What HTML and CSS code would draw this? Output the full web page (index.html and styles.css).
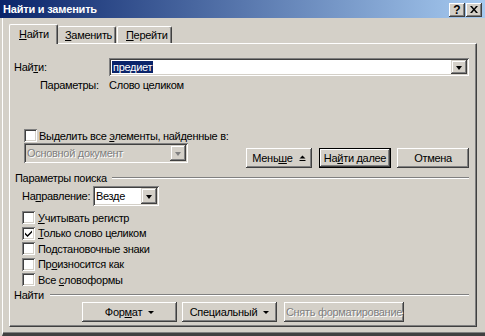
FILE: index.html
```html
<!DOCTYPE html>
<html lang="ru">

<head>
    <meta charset="UTF-8">
    <meta name="viewport" content="width=device-width, initial-scale=1.0">
    <title>Найти и заменить</title>
    <link rel="stylesheet" href="styles.css">
</head>

<body>
    <div class="window">
        <!-- Title bar -->
        <div class="titlebar">
            <span class="title">Найти и заменить</span>
            <div class="caption-btns">
                <div class="caption-btn">?</div>
                <div class="caption-btn">
                    <svg width="8" height="7" viewBox="0 0 8 7">
                        <path d="M0 0h2l2 2.5l2-2.5h2l-3 3.5l3 3.5h-2l-2-2.5l-2 2.5h-2l3-3.5z" fill="#000" />
                    </svg>
                </div>
            </div>
        </div>

        <div class="client">
            <!-- Tabs -->
            <div class="tabs">
                <div class="tab active"><u>Н</u>айти</div>
                <div class="tab tab-replace"><u>З</u>аменить</div>
                <div class="tab tab-goto"><u>П</u>ерейти</div>
            </div>

            <div class="panel">
                <div class="find-row">
                    <span class="find-label">Най<u>т</u>и:</span>
                    <div class="combo find-combo">
                        <span class="combo-text"><span class="selected">предиет</span></span>
                        <div class="combo-btn"><span class="arrow"></span></div>
                    </div>
                </div>

                <div class="params-row">
                    <span class="params-label">Параметры:</span>
                    <span>Слово целиком</span>
                </div>

                <div class="check-row">
                    <span class="checkbox"></span>
                    <span>Выделить все <u>э</u>лементы, найденные в:</span>
                </div>

                <div class="scope-row">
                    <div class="combo disabled scope-combo">
                        <span class="combo-text">Основной документ</span>
                        <div class="combo-btn"><span class="arrow"></span></div>
                    </div>
                    <div class="btn less">Мень<u>ш</u>е
                        <svg class="less-icon" width="7" height="7" viewBox="0 0 7 7">
                            <path d="M3.5 0.5L6.5 3.5H0.5z M0.5 5h6v1h-6z" fill="#000" />
                        </svg>
                    </div>
                    <div class="btn default find-next">На<u>й</u>ти далее</div>
                    <div class="btn cancel">Отмена</div>
                </div>

                <div class="group-head search-head">
                    <span>Параметры поиска</span>
                    <span class="etch"></span>
                </div>

                <div class="direction-row">
                    <span class="direction-label">На<u>п</u>равление:</span>
                    <div class="combo direction-combo">
                        <span class="combo-text">Везде</span>
                        <div class="combo-btn"><span class="arrow"></span></div>
                    </div>
                </div>

                <ul class="options">
                    <li><span class="checkbox"></span><span><u>У</u>читывать регистр</span></li>
                    <li><span class="checkbox checked">
                            <svg width="9" height="9" viewBox="0 0 9 9">
                                <path d="M1 3.5L3.5 6L8 1.5V3.5L3.5 8L1 5.5z" fill="#000" />
                            </svg>
                        </span><span><u>Т</u>олько слово целиком</span></li>
                    <li><span class="checkbox"></span><span>Подстановочные знаки</span></li>
                    <li><span class="checkbox"></span><span>Пр<u>о</u>износится как</span></li>
                    <li><span class="checkbox"></span><span>Все <u>с</u>ловоформы</span></li>
                </ul>

                <div class="group-head find-head">
                    <span>Найти</span>
                    <span class="etch"></span>
                </div>

                <div class="bottom-buttons">
                    <div class="btn format">Фор<u>м</u>ат <span class="small-arrow"></span></div>
                    <div class="btn special">Специальный <span class="small-arrow"></span></div>
                    <div class="btn disabled clear">Снять форматирование</div>
                </div>
            </div>
        </div>
    </div>
</body>

</html>
```

FILE: styles.css
```css
* {
    box-sizing: border-box;
}

body {
    margin: 0;
    background-color: #d4d0c8;
    font-family: "Liberation Sans", Arial, sans-serif;
    font-size: 11px;
    letter-spacing: -0.3px;
    color: #000;
    overflow: hidden;
}

u {
    text-decoration: underline;
    text-underline-offset: 1px;
}

.window {
    width: 485px;
    height: 336px;
    overflow: hidden;
    background-color: #d4d0c8;
}

/* Title bar */
.titlebar {
    height: 18px;
    display: flex;
    align-items: center;
    justify-content: space-between;
    background: linear-gradient(to right, #0a246a, #a6caf0);
    padding-left: 3px;
    padding-right: 3px;
}

.title {
    color: #fff;
    font-weight: bold;
    font-size: 11px;
    letter-spacing: -0.2px;
}

.caption-btns {
    display: flex;
    margin-top: 1px;
}

.caption-btn {
    width: 16px;
    height: 14px;
    display: flex;
    align-items: center;
    justify-content: center;
    background-color: #d4d0c8;
    font-weight: bold;
    font-size: 12px;
    letter-spacing: 0;
    box-shadow: inset -1px -1px #404040, inset 1px 1px #fff, inset -2px -2px #808080, inset 2px 2px #d4d0c8;
}

.caption-btns .caption-btn:first-child {
    margin-right: 1px;
}

/* Client area */
.client {
    height: 318px;
    margin-left: 2px;
    border-left: 1px solid #fff;
    border-bottom: 3px solid #404040;
    box-shadow: inset 0 -1px #808080;
    padding-top: 6px;
    padding-left: 6px;
}

.tabs {
    display: flex;
    align-items: flex-end;
    height: 19px;
}

.tab {
    height: 17px;
    display: flex;
    align-items: center;
    background-color: #d4d0c8;
    border-top: 1px solid #fff;
    border-left: 1px solid #fff;
    border-right: 1px solid #404040;
    box-shadow: inset -1px 0 #808080;
    border-radius: 2px 2px 0 0;
}

.tab.active {
    width: 49px;
    height: 20px;
    margin-bottom: -1px;
    padding-left: 9px;
    padding-bottom: 2px;
    position: relative;
    z-index: 1;
}

.tab-replace {
    width: 58px;
    padding-left: 7px;
    border-left: none;
}

.tab-goto {
    width: 55px;
    margin-left: 1px;
    padding-left: 8px;
}

.panel {
    width: 468px;
    height: 284px;
    border-top: 1px solid #fff;
    border-left: 1px solid #fff;
    border-right: 1px solid #404040;
    border-bottom: 1px solid #404040;
    box-shadow: inset -1px -1px #808080;
    padding-left: 4px;
    padding-right: 7px;
}

/* Find row */
.find-row {
    display: flex;
    align-items: center;
    margin-top: 14px;
}

.find-label {
    width: 95px;
}

.combo {
    height: 18px;
    display: flex;
    align-items: center;
    background-color: #fff;
    box-shadow: inset 1px 1px #808080, inset -1px -1px #fff, inset 2px 2px #404040, inset -2px -2px #d4d0c8;
    padding: 2px;
}

.combo-text {
    flex: 1;
    padding-left: 1px;
    white-space: nowrap;
    overflow: hidden;
}

.combo-btn {
    width: 16px;
    height: 100%;
    display: flex;
    align-items: center;
    justify-content: center;
    background-color: #d4d0c8;
    box-shadow: inset -1px -1px #404040, inset 1px 1px #d4d0c8, inset -2px -2px #808080, inset 2px 2px #fff;
}

.arrow {
    width: 0;
    height: 0;
    border-left: 3.5px solid transparent;
    border-right: 3.5px solid transparent;
    border-top: 4px solid #000;
    margin-top: 1px;
}

.find-combo {
    width: 360px;
}

.selected {
    display: inline-block;
    background-color: #0a246a;
    color: #fff;
    line-height: 12px;
    padding: 0 1px;
}

/* Parameters */
.params-row {
    display: flex;
    margin-top: 3px;
    padding-left: 26px;
    line-height: 13px;
}

.params-label {
    width: 69px;
}

.checkbox {
    width: 13px;
    height: 13px;
    flex-shrink: 0;
    display: flex;
    align-items: center;
    justify-content: center;
    background-color: #fff;
    box-shadow: inset 1px 1px #808080, inset -1px -1px #fff, inset 2px 2px #404040, inset -2px -2px #d4d0c8;
}

.check-row {
    display: flex;
    align-items: center;
    margin-top: 37px;
    margin-left: 10px;
    height: 13px;
}

.check-row .checkbox {
    margin-right: 2px;
}

/* Scope and buttons */
.scope-row {
    display: flex;
    align-items: flex-start;
    margin-top: 1px;
    height: 25px;
}

.scope-combo {
    width: 164px;
    height: 20px;
    margin-left: 10px;
}

.combo.disabled {
    background-color: #d4d0c8;
    color: #808080;
}

.combo.disabled .combo-text {
    text-shadow: 1px 1px #fff;
}

.combo.disabled .arrow {
    border-top-color: #808080;
}

.btn {
    height: 20px;
    display: flex;
    align-items: center;
    justify-content: center;
    background-color: #d4d0c8;
    box-shadow: inset -1px -1px #404040, inset 1px 1px #fff, inset -2px -2px #808080, inset 2px 2px #d4d0c8;
    white-space: nowrap;
}

.btn.default {
    border: 1px solid #000;
}

.btn.disabled {
    color: #808080;
    text-shadow: 1px 1px #fff;
}

.less {
    width: 66px;
    margin-top: 5px;
    margin-left: 58px;
}

.less-icon {
    margin-left: 6px;
}

.find-next {
    width: 72px;
    margin-top: 5px;
    margin-left: 7px;
}

.cancel {
    width: 72px;
    margin-top: 5px;
    margin-left: 6px;
}

/* Group headers */
.group-head {
    display: flex;
    align-items: center;
    height: 12px;
    line-height: 12px;
}

.etch {
    flex: 1;
    height: 2px;
    border-top: 1px solid #808080;
    border-bottom: 1px solid #fff;
    margin-left: 5px;
}

.search-head {
    margin-top: 4px;
    padding-left: 1px;
}

.find-head {
    margin-top: 2px;
}

.find-head .etch {
    margin-left: 6px;
}

/* Direction */
.direction-row {
    display: flex;
    align-items: center;
    margin-top: 2px;
    margin-left: 8px;
}

.direction-label {
    width: 71px;
}

.direction-combo {
    width: 66px;
    height: 20px;
}

/* Options list */
.options {
    list-style: none;
    margin: 4px 0 0 8px;
    padding: 0;
    height: 77px;
    overflow: hidden;
}

.options li {
    display: flex;
    align-items: center;
    height: 15.5px;
    line-height: 12px;
}

.options .checkbox {
    margin-right: 3px;
}

/* Bottom buttons */
.bottom-buttons {
    display: flex;
    margin-top: 1px;
    margin-left: 68px;
}

.format {
    width: 95px;
}

.special {
    width: 95px;
    margin-left: 5px;
}

.clear {
    width: 120px;
    margin-left: 7px;
}

.small-arrow {
    width: 0;
    height: 0;
    margin-left: 6px;
    border-left: 3px solid transparent;
    border-right: 3px solid transparent;
    border-top: 3px solid #000;
}
```
